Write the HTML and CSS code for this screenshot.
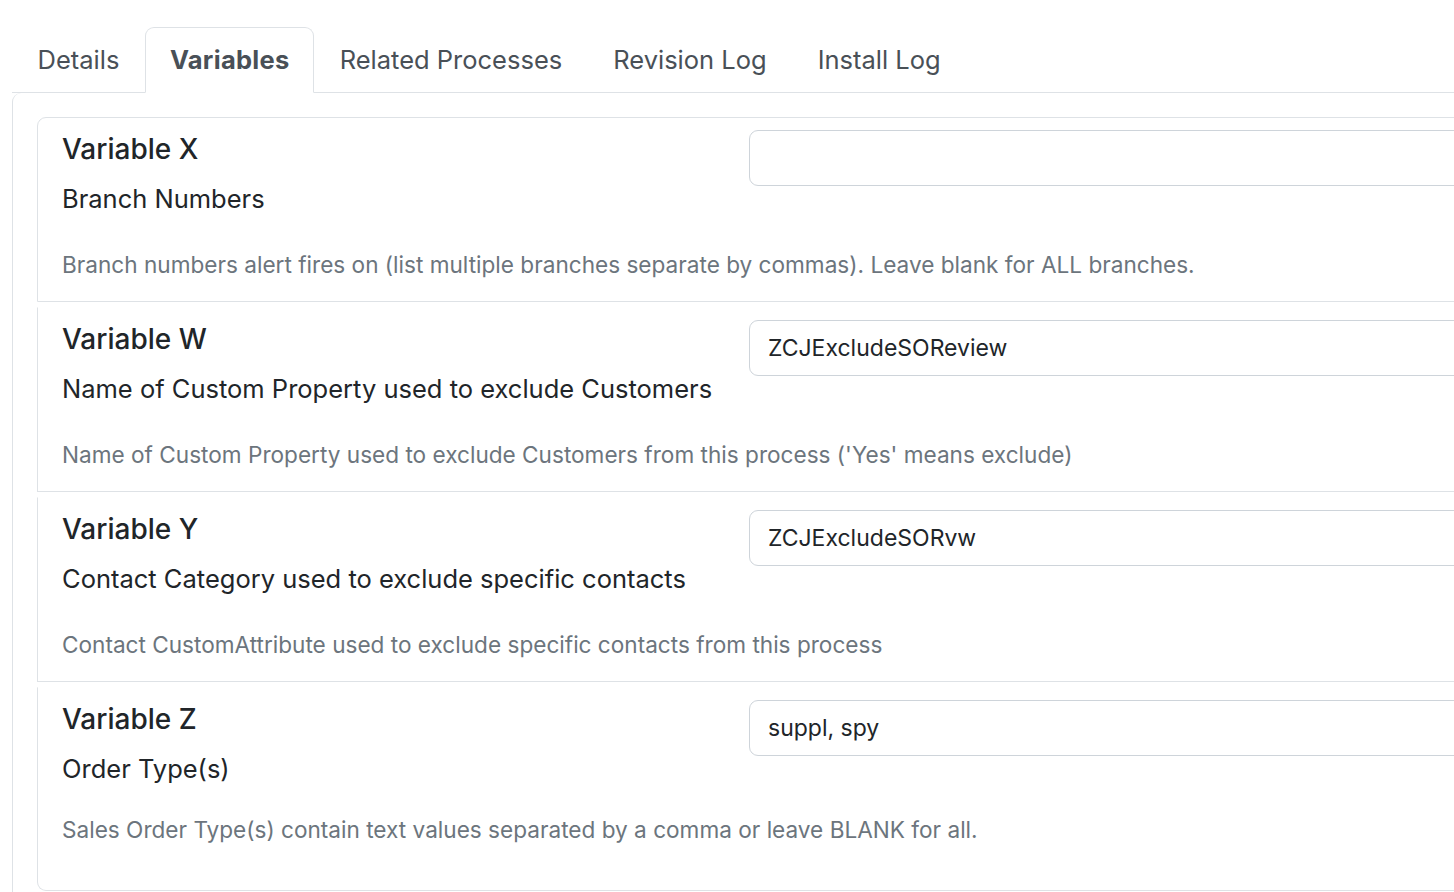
FILE: index.html
```html
<!DOCTYPE html>
<html lang="en">
<head>
  <meta charset="UTF-8">
  <meta name="viewport" content="width=device-width, initial-scale=1.0">
  <title>Process Variables</title>
  <link rel="stylesheet" href="styles.css">
</head>
<body>
  <!-- Tabs -->
  <ul class="nav-tabs">
    <li class="nav-item"><a class="nav-link" href="#">Details</a></li>
    <li class="nav-item"><a class="nav-link active" href="#">Variables</a></li>
    <li class="nav-item"><a class="nav-link" href="#">Related Processes</a></li>
    <li class="nav-item"><a class="nav-link" href="#">Revision Log</a></li>
    <li class="nav-item"><a class="nav-link" href="#">Install Log</a></li>
  </ul>

  <!-- Variables tab -->
  <div class="tab-content">
    <div class="var-list">
      <div class="var-item">
        <div class="var-row">
          <div class="var-label">
            <h5 class="var-title">Variable X</h5>
            <div class="var-name">Branch Numbers</div>
          </div>
          <div class="var-field">
            <input type="text" class="form-control" value="">
          </div>
        </div>
        <p class="var-help">Branch numbers alert fires on (list multiple branches separate by commas). Leave blank for ALL branches.</p>
      </div>

      <div class="var-item">
        <div class="var-row">
          <div class="var-label">
            <h5 class="var-title">Variable W</h5>
            <div class="var-name">Name of Custom Property used to exclude Customers</div>
          </div>
          <div class="var-field">
            <input type="text" class="form-control" value="ZCJExcludeSOReview">
          </div>
        </div>
        <p class="var-help">Name of Custom Property used to exclude Customers from this process ('Yes' means exclude)</p>
      </div>

      <div class="var-item">
        <div class="var-row">
          <div class="var-label">
            <h5 class="var-title">Variable Y</h5>
            <div class="var-name">Contact Category used to exclude specific contacts</div>
          </div>
          <div class="var-field">
            <input type="text" class="form-control" value="ZCJExcludeSORvw">
          </div>
        </div>
        <p class="var-help">Contact CustomAttribute used to exclude specific contacts from this process</p>
      </div>

      <div class="var-item">
        <div class="var-row">
          <div class="var-label">
            <h5 class="var-title">Variable Z</h5>
            <div class="var-name">Order Type(s)</div>
          </div>
          <div class="var-field">
            <input type="text" class="form-control" value="suppl, spy">
          </div>
        </div>
        <p class="var-help">Sales Order Type(s) contain text values separated by a comma or leave BLANK for all.</p>
      </div>
    </div>
  </div>
</body>
</html>
```

FILE: styles.css
```css
html {
  overflow: hidden;
}
body {
  font-family: Inter, "Noto Sans", sans-serif;
  margin: 0;
  padding: 27px 0 0 12px;
  width: 1700px;
  color: #212529;
  background: #fff;
}
.nav-tabs {
  display: flex;
  list-style: none;
  margin: 0;
  padding: 0;
  border-bottom: 1px solid #dee2e6;
}
.nav-link {
  display: block;
  height: 64px;
  line-height: 64px;
  padding: 0 24.5px;
  font-size: 25.5px;
  color: #495057;
  text-decoration: none;
  border: 1px solid transparent;
  border-radius: 9px 9px 0 0;
  margin-bottom: -1px;
}
.nav-link.active {
  font-weight: 700;
  letter-spacing: 0.3px;
  padding: 0 23.5px 0 24px;
  border-color: #dee2e6 #dee2e6 #fff;
  background: #fff;
}
.tab-content {
  border: 1px solid #dee2e6;
  border-top: 0;
  border-top-left-radius: 9px;
  padding: 24px;
}
.var-item {
  border: 1px solid #dee2e6;
  border-top-color: transparent;
  padding: 13px 24px 20px;
  margin-top: 5px;
}
.var-item:first-child {
  border-top-color: #dee2e6;
  border-top-left-radius: 9px;
  margin-top: 0;
}
.var-item:last-child {
  border-bottom-left-radius: 9px;
  padding-bottom: 44px;
}
.var-row {
  display: grid;
  grid-template-columns: 687px 1fr;
}
.var-title {
  font-size: 28px;
  font-weight: 500;
  line-height: 36px;
  margin: 0 0 14px;
}
.var-name {
  font-size: 25.5px;
  line-height: 36px;
}
.form-control {
  display: block;
  width: 100%;
  box-sizing: border-box;
  height: 56px;
  margin-top: -1px;
  padding: 0 18px;
  font-family: inherit;
  font-size: 23px;
  color: #212529;
  border: 1px solid #ced4da;
  border-radius: 9px;
  outline: none;
}
.var-help {
  font-size: 22.6px;
  line-height: 33px;
  color: #6c757d;
  margin: 31px 0 0;
}
.var-item:last-child .var-help {
  margin-top: 26px;
}
```
